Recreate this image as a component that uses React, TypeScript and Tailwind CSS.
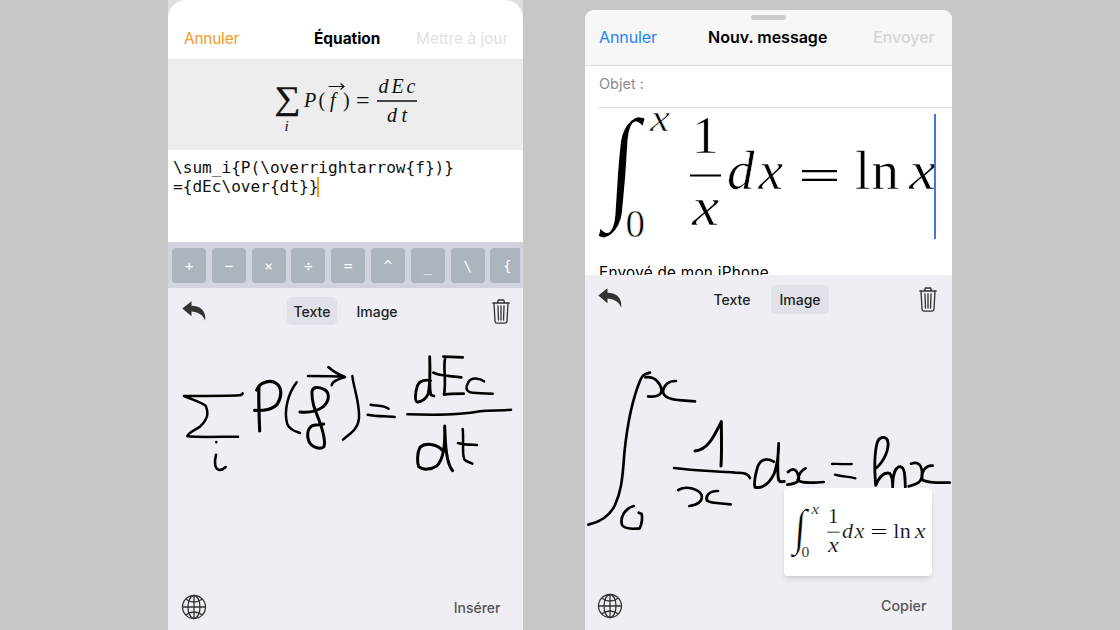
import React from "react";

const SERIF = "'Liberation Serif', serif";
const THIN = "'DejaVu Sans Light', 'DejaVu Sans', sans-serif";

function IntegralFormula({ className }: { className: string }) {
  return (
    <svg className={className} viewBox="597 110 340 130" overflow="visible" fill="#000">
      <text transform="translate(605.600 205) skewX(-4) scale(0.82 0.98)" fontFamily={SERIF} fontSize="127" stroke="#fff" strokeWidth="2">∫</text>
      <g fontFamily={SERIF} stroke="#fff" strokeWidth="0.600">
        <text x="650" y="131" fontSize="38" fontStyle="italic" textLength="20" lengthAdjust="spacingAndGlyphs">x</text>
        <text x="625.500" y="237" fontSize="39">0</text>
        <text x="692" y="153" fontSize="53">1</text>
        <text x="692" y="225" fontSize="55" fontStyle="italic" textLength="27" lengthAdjust="spacingAndGlyphs">x</text>
        <text x="727" y="189" fontSize="55" fontStyle="italic" textLength="56">dx</text>
        <text x="855" y="189" fontSize="55" textLength="44">ln</text>
        <text x="909" y="189" fontSize="55" fontStyle="italic" textLength="27" lengthAdjust="spacingAndGlyphs">x</text>
      </g>
      <text x="796" y="193" fontFamily={THIN} fontWeight="200" fontSize="56">=</text>
      <path d="M690 175.500H721" stroke="#000" strokeWidth="2" />
    </svg>
  );
}

function SumFormula() {
  return (
    <svg className="h-[91px] w-[355px]" viewBox="168 59 355 91" fill="#111">
      <g fontFamily={SERIF}>
        <text x="274.500" y="109" fontSize="33" textLength="26" lengthAdjust="spacingAndGlyphs" stroke="#111" strokeWidth="0.400">∑</text>
        <text x="284.500" y="131" fontSize="15" fontStyle="italic">i</text>
        <text x="304" y="107" fontSize="20" fontStyle="italic">P</text>
        <text x="318.500" y="107" fontSize="20">(</text>
        <text x="330" y="107" fontSize="20" fontStyle="italic">f</text>
        <text x="343" y="107" fontSize="20">)</text>
        <text x="356" y="108" fontSize="24">=</text>
        <text x="378.500" y="93" fontSize="20" fontStyle="italic" textLength="37">dEc</text>
        <text x="387" y="122" fontSize="20" fontStyle="italic" textLength="20">dt</text>
      </g>
      <path d="M328.500 86.500H343.500M340.500 83.500L344 86.500L340.500 89.500" fill="none" stroke="#111" strokeWidth="1.200" />
      <path d="M377 101H417" stroke="#111" strokeWidth="1.500" />
    </svg>
  );
}

function UndoIcon() {
  return (
    <svg className="h-5 w-6 shrink-0" viewBox="0 0 24 20" fill="#333">
      <path d="M.3 7.500L9.500 .3V4.800C18.500 5 24 9.500 23.300 19.700C20.500 13.500 16 11 9.500 10.600V15.200Z" />
    </svg>
  );
}

function TrashIcon() {
  return (
    <svg className="h-[25px] w-[18px] shrink-0" viewBox="0 0 18 25" fill="none" stroke="#333" strokeWidth="1.300" strokeLinecap="round" strokeLinejoin="round">
      <path d="M.8 4H17.200M5.500 3.800L6.300 1H11.700L12.500 3.800M2 4.500L3 22Q3.200 24.200 5 24.200H13Q14.800 24.200 15 22L16 4.500M6 7L6.500 21M9 7V21M12 7L11.500 21" />
    </svg>
  );
}

function GlobeIcon() {
  return (
    <svg className="h-[26px] w-[26px]" viewBox="0 0 26 26" fill="none" stroke="#333" strokeWidth="1.300">
      <circle cx="13" cy="13" r="11.500" />
      <ellipse cx="13" cy="13" rx="6" ry="11.500" />
      <path d="M13 1.400V24.600M1.400 13H24.600M4.500 5Q13 11 21.500 5M4.500 21Q13 15 21.500 21" />
    </svg>
  );
}

function LeftInk() {
  return (
    <svg className="h-[160px] w-[355px]" viewBox="24 0 1065 480" fill="none" stroke="#000" strokeWidth="7.500" strokeLinecap="round" strokeLinejoin="round">
      <path d="M248 190Q246 196 235 196C200 199 110 197 72 198C100 210 120 215 137 227C147 250 143 268 120 290C100 303 82 310 82 319C120 323 180 320 234 320" />
      <path d="M169 336v1M168 374C162 400 165 418 178 420C186 420 192 416 197 411" />
      <path d="M297 168C295 200 297 250 299 303M290 180C300 155 330 150 345 158C365 168 368 195 352 222C340 238 310 243 284 241" strokeWidth="9.500" />
      <path d="M410 157C385 190 370 240 382 283C390 300 405 305 420 309" />
      <path d="M444 138C480 138 520 138 555 141M505 111C520 125 540 135 555 141C535 148 517 152 515 166" />
      <path d="M420 246C440 248 470 245 490 230C510 212 510 185 490 177C475 170 458 170 456 185C454 215 465 240 477 270C488 300 498 330 492 350C480 360 455 352 447 335C438 310 445 290 462 286C475 284 485 284 491 282" strokeWidth="9" />
      <path d="M577 138C580 170 600 220 597 265C593 300 570 310 549 329" />
      <path d="M632 224C650 228 670 225 686 236M623 254C650 260 680 258 704 261" />
      <path d="M812 152C800 148 778 150 772 168C765 190 764 215 772 216C785 216 800 205 805 190C810 160 811 120 809 80C811 130 806 175 813 195L822 198" strokeWidth="8.500" />
      <path d="M820 128C835 137 860 137 904 142M850 80L908 82M856 82C848 110 860 150 852 194C870 191 890 191 911 191" strokeWidth="8" />
      <path d="M972 154C960 145 935 140 926 155C918 170 915 180 930 187C950 191 975 190 998 191" />
      <path d="M742 253C830 256 900 256 960 244C990 240 1030 243 1053 239" />
      <path d="M848 362C830 340 795 338 780 352C770 370 772 400 776 410C790 422 815 418 830 408C850 390 856 340 854 288C856 340 858 400 878 422" strokeWidth="9" />
      <path d="M908 297C912 330 905 370 913 388C920 396 930 397 937 401M894 339C915 345 930 344 951 345" />
    </svg>
  );
}

function RightInk() {
  return (
    <svg className="h-[180px] w-[367px]" viewBox="14 0 1101 540" fill="none" stroke="#000" strokeWidth="8" strokeLinecap="round" strokeLinejoin="round">
      <path d="M209 68C190 72 186 78 180 90C155 150 140 230 132 310C126 400 120 430 104 465C90 495 65 515 24 524" />
      <path d="M195 82C225 78 240 100 244 120C243 135 230 142 203 139M287 93C265 92 250 105 248 125C250 145 280 150 305 151L344 154" />
      <path d="M344 303C385 300 405 250 423 215C423 260 425 300 422 348" strokeWidth="9" />
      <path d="M281 354C340 362 400 363 465 368C500 368 505 375 509 384" />
      <path d="M294 420C320 405 355 418 364 435C368 455 350 465 327 468M413 423C385 422 375 440 380 452C395 462 425 459 451 463" />
      <path d="M160 468C135 475 118 500 125 525C135 538 160 537 178 535C186 520 186 500 184 492L175 488" />
      <g transform="translate(240 150)" strokeWidth="8.500">
        <path d="M340 185C320 172 300 178 292 200C285 225 280 250 284 262C310 266 330 245 342 220C352 190 355 160 355 130C352 180 350 220 355 240C358 246 365 246 372 244" />
        <path d="M383 216C400 200 410 212 413 225C420 240 415 250 381 254M436 205C420 212 415 225 412 240C425 252 460 248 490 246" strokeWidth="8" />
        <path d="M515 192C540 191 560 194 574 192M524 224C545 231 565 229 585 235" strokeWidth="7" />
        <path d="M644 207C672 185 688 145 682 122C676 108 656 108 650 130C640 170 643 220 646 256C655 235 670 215 688 220C697 228 697 245 697 262C697 225 705 200 720 200C733 202 734 225 735 262" />
        <path d="M752 191C775 182 785 198 785 220C785 245 775 252 745 259M817 197C795 196 782 215 786 240C805 250 840 248 868 248" strokeWidth="8" />
      </g>
    </svg>
  );
}

const KEYS = ["+", "−", "×", "÷", "=", "^", "_", "\\", "{"];

export default function App() {
  return (
    <div className="flex h-[630px] w-[1120px] overflow-hidden bg-[#c7c7c7] font-['Inter',sans-serif] text-[16px]">
      <section className="ml-[168px] flex w-[355px] shrink-0 flex-col bg-[#dedede]">
        <header className="flex h-[59px] items-center rounded-t-[18px] bg-white pt-[18px] pl-[16px] text-[15.400px] whitespace-nowrap">
          <span className="w-[130px] tracking-[-0.200px] text-[#f09a1f]">Annuler</span>
          <span className="w-[102px] font-bold">Équation</span>
          <span className="text-[#e1e1e1]">Mettre à jour</span>
        </header>
        <div className="h-[91px] bg-[#ededed]"><SumFormula /></div>
        <div className="h-[92px] bg-white pt-[8px] pl-[5px] font-['DejaVu_Sans_Mono',monospace] text-[16.100px] leading-[19px] text-[#111]">
          <div>{"\\sum_i{P(\\overrightarrow{f})}"}</div>
          <div className="flex">{"={dEc\\over{dt}}"}<span className="-ml-px h-[20px] w-[2px] bg-[#f79a1c]" /></div>
        </div>
        <div className="flex h-[46px] bg-[#d1d4dc] pt-[6px] pl-[4px]">
          <div className="flex w-[348px] gap-[5.800px] overflow-hidden">
            {KEYS.map((k) => (
              <span key={k} className="flex h-[35px] w-[34px] shrink-0 items-center justify-center rounded bg-[#acb4bc] pt-[2px] font-['DejaVu_Sans_Mono',monospace] text-[14.500px] text-white">{k}</span>
            ))}
          </div>
        </div>
        <div className="flex flex-1 flex-col bg-[#efeef5]">
          <div className="flex h-[42px] items-start pl-[14px]">
            <div className="pt-[13px]"><UndoIcon /></div>
            <span className="mt-[9px] ml-[81px] flex h-[28px] w-[50px] items-center justify-center rounded-[5px] bg-[#e1e1e9] text-[14px] font-medium text-[#222]">Texte</span>
            <span className="mt-[9px] ml-[15px] flex h-[28px] w-[50px] items-center justify-center text-[14px] font-medium text-[#222]">Image</span>
            <div className="ml-[90px] pt-[11px]"><TrashIcon /></div>
          </div>
          <LeftInk />
          <div className="mt-auto flex h-[36px] items-start justify-between pr-[22.500px] pl-[13px] text-[14px] font-medium text-[#555]">
            <GlobeIcon /><span className="pt-[4px] leading-[20px]">Insérer</span>
          </div>
        </div>
      </section>

      <section className="mt-[10px] ml-[62px] flex w-[366.500px] shrink-0 flex-col overflow-hidden rounded-t-[9px] bg-white">
        <header className="flex h-[56px] flex-col border-b border-[#dadada] bg-[#f7f7f7]">
          <span className="mt-[5px] h-[5px] w-[35px] self-center rounded-full bg-[#cdcdcf]" />
          <div className="flex h-[34px] items-center pl-[14px] whitespace-nowrap">
            <span className="w-[109px] tracking-[-0.100px] text-[#1b84f5]">Annuler</span>
            <span className="w-[165px] font-semibold">Nouv. message</span>
            <span className="font-medium text-[#d4d4d6]">Envoyer</span>
          </div>
        </header>
        <div className="ml-[14px] flex h-[42px] items-center border-b border-[#dedede] pb-[6px] text-[14.500px] text-[#8c8c90]">Objet :</div>
        <div className="flex h-[167px] flex-col overflow-hidden">
          <div className="flex pt-[2px] pl-[12px]">
            <IntegralFormula className="h-[130px] w-[340px] shrink-0" />
            <span className="mt-[4px] -ml-[3px] h-[125px] w-[2px] shrink-0 bg-[#4a73e8]" />
          </div>
          <div className="pt-[23px] pl-[14px] text-[15.300px] leading-[20px] tracking-[0.250px] whitespace-nowrap">Envoyé de mon iPhone</div>
        </div>
        <div className="relative flex flex-1 flex-col bg-[#efeef5]">
          <div className="flex h-[75px] items-start pl-[13px]">
            <div className="pt-[13px]"><UndoIcon /></div>
            <span className="mt-[10px] ml-[85px] flex h-[29px] w-[50px] items-center justify-center text-[14px] font-medium text-[#222]">Texte</span>
            <span className="mt-[10px] ml-[14px] flex h-[29px] w-[58px] items-center justify-center rounded-[5px] bg-[#e1e1e9] text-[14px] font-medium text-[#222]">Image</span>
            <div className="ml-[90px] pt-[12px]"><TrashIcon /></div>
          </div>
          <RightInk />
          <div className="mt-auto flex h-[37px] items-start justify-between pr-[25px] pl-[12px] text-[14.300px] font-medium text-[#555]">
            <GlobeIcon /><span className="pt-[3px] leading-[20px]">Copier</span>
          </div>
          <div className="absolute top-[213px] left-[199px] flex h-[88px] w-[148px] justify-center rounded-[4px] bg-white pt-[18px] shadow-md">
            <IntegralFormula className="h-[52px] w-[136px]" />
          </div>
        </div>
      </section>
    </div>
  );
}
